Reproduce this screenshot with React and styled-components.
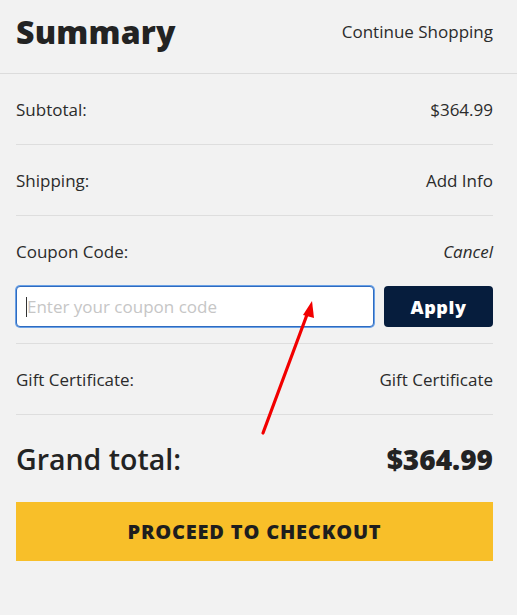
import React from "react";
import styled, { createGlobalStyle } from "styled-components";

const Global = createGlobalStyle`
  html, body { margin: 0; padding: 0; background: #f2f2f2; }
  body { font-family: "Open Sans", "Noto Sans", sans-serif; color: #2b2b2b; }
  * { box-sizing: border-box; }
`;

const Page = styled.div`
  position: relative;
  width: 517px;
  min-height: 615px;
  background: #f2f2f2;
`;

const Header = styled.header`
  display: flex;
  align-items: center;
  justify-content: space-between;
  height: 74px;
  padding: 0 24px 10px 16px;
  border-bottom: 1px solid #dcdcdc;
`;

const Title = styled.h1`
  margin: 0;
  font-family: "Open Sans", sans-serif;
  font-weight: 800;
  font-size: 32px;
  letter-spacing: 0.2px;
  color: #232323;
`;

const HeaderLink = styled.a`
  font-size: 17px;
  color: #2b2b2b;
  text-decoration: none;
`;

const Body = styled.div`
  padding: 0 24px 0 16px;
`;

const Row = styled.div`
  display: flex;
  align-items: center;
  justify-content: space-between;
  height: ${(p) => p.$h || 71}px;
  border-bottom: ${(p) => (p.$noBorder ? "none" : "1px solid #dedede")};
  font-size: 17px;
  color: #2b2b2b;
`;

const Value = styled.span`
  font-style: ${(p) => (p.$italic ? "italic" : "normal")};
`;

const CouponBlock = styled.div`
  padding-bottom: 16px;
  border-bottom: 1px solid #dedede;
`;

const CouponForm = styled.div`
  display: flex;
  gap: 10px;
  height: 41px;
`;

const InputWrap = styled.div`
  position: relative;
  flex: 1;
`;

const Input = styled.input`
  width: 100%;
  height: 100%;
  border: 1px solid #2e6bc0;
  box-shadow: 0 0 0 1px #6aa1e6;
  border-radius: 4px;
  background: #fff;
  padding: 0 10px;
  font-family: "Open Sans", sans-serif;
  font-size: 17px;
  color: #333;
  outline: none;
  &::placeholder { color: #c6c6c6; }
`;

const Caret = styled.span`
  position: absolute;
  left: 10px;
  top: 11px;
  width: 1px;
  height: 20px;
  background: #333;
`;

const ApplyButton = styled.button`
  width: 109px;
  border: none;
  border-radius: 4px;
  background: #061d3d;
  color: #fff;
  font-family: "Open Sans", sans-serif;
  font-weight: 800;
  font-size: 18px;
  letter-spacing: 0.6px;
  cursor: pointer;
`;

const TotalLabel = styled.span`
  font-size: 28.5px;
  font-weight: 600;
  color: #232323;
`;

const TotalValue = styled.span`
  font-size: 28px;
  font-weight: 800;
  color: #232323;
`;

const CheckoutButton = styled.button`
  width: 100%;
  height: 59px;
  border: none;
  background: #f8bf29;
  color: #1e1e1e;
  font-family: "Open Sans", sans-serif;
  font-weight: 800;
  font-size: 20px;
  letter-spacing: 0.8px;
  cursor: pointer;
`;

const Arrow = styled.svg`
  position: absolute;
  left: 0;
  top: 0;
  pointer-events: none;
`;

export default function App() {
  return (
    <Page>
      <Global />
      <Header>
        <Title>Summary</Title>
        <HeaderLink href="#">Continue Shopping</HeaderLink>
      </Header>
      <Body>
        <Row>
          <span>Subtotal:</span>
          <Value>$364.99</Value>
        </Row>
        <Row>
          <span>Shipping:</span>
          <Value>Add Info</Value>
        </Row>
        <CouponBlock>
          <Row $h={70} $noBorder>
            <span>Coupon Code:</span>
            <Value $italic>Cancel</Value>
          </Row>
          <CouponForm>
            <InputWrap>
              <Input placeholder="Enter your coupon code" />
              <Caret />
            </InputWrap>
            <ApplyButton>Apply</ApplyButton>
          </CouponForm>
        </CouponBlock>
        <Row>
          <span>Gift Certificate:</span>
          <Value>Gift Certificate</Value>
        </Row>
        <Row $h={87} $noBorder>
          <TotalLabel>Grand total:</TotalLabel>
          <TotalValue>$364.99</TotalValue>
        </Row>
        <CheckoutButton>PROCEED TO CHECKOUT</CheckoutButton>
      </Body>
      <Arrow width="517" height="615" viewBox="0 0 517 615">
        <line x1="263" y1="433" x2="308" y2="312" stroke="#f20000" strokeWidth="3.2" strokeLinecap="round" />
        <polygon points="312,301 303,315 314,318" fill="#f20000" />
      </Arrow>
    </Page>
  );
}
